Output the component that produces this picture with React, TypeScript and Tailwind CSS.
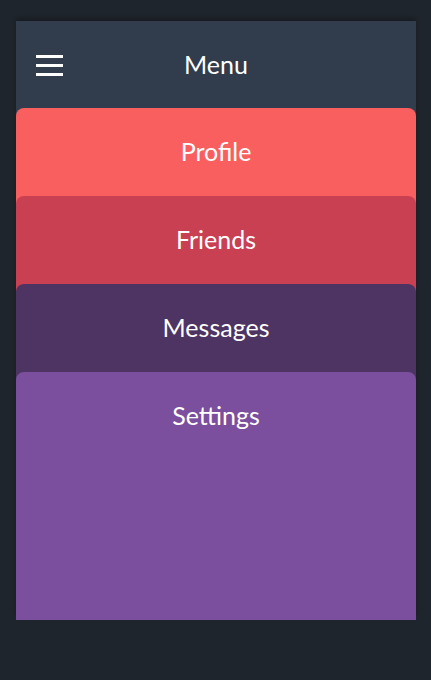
import React from "react"

const items = [
  { label: "Profile", color: "bg-[#f95f5e]", behind: "bg-[#313c4d]" },
  { label: "Friends", color: "bg-[#c94052]", behind: "bg-[#f95f5e]" },
  { label: "Messages", color: "bg-[#4e3462]", behind: "bg-[#c94052]" },
  { label: "Settings", color: "bg-[#7b4f9d]", behind: "bg-[#4e3462]" },
]

function MenuIcon() {
  return (
    <div className="flex w-[27px] flex-col gap-[6px]">
      <span className="block h-[3px] w-full bg-white" />
      <span className="block h-[3px] w-full bg-white" />
      <span className="block h-[3px] w-full bg-white" />
    </div>
  )
}

export default function App() {
  return (
    <div
      className="min-h-[680px] bg-[#1f252c] px-[16px] pt-[21px]"
      style={{ fontFamily: "Lato, 'Noto Sans', sans-serif" }}
    >
      <div className="flex h-[599px] w-[400px] flex-col overflow-hidden bg-[#313c4d] shadow-[0_-3px_4px_rgba(0,0,0,0.25)]">
        <header className="relative flex h-[87px] shrink-0 items-center justify-center">
          <button className="absolute left-[20px] top-[34px]">
            <MenuIcon />
          </button>
          <h1 className="text-[25px] font-normal text-white">Menu</h1>
        </header>
        {items.map((item, i) => {
          const last = i === items.length - 1
          return (
            <div
              key={item.label}
              className={`${item.behind} ${last ? "flex flex-1 flex-col" : "shrink-0"}`}
            >
              <div
                className={`${item.color} rounded-t-[8px] ${last ? "flex-1" : "h-[88px]"}`}
              >
                <div className="flex h-[88px] items-center justify-center text-[25px] text-white">
                  {item.label}
                </div>
              </div>
            </div>
          )
        })}
      </div>
    </div>
  )
}
